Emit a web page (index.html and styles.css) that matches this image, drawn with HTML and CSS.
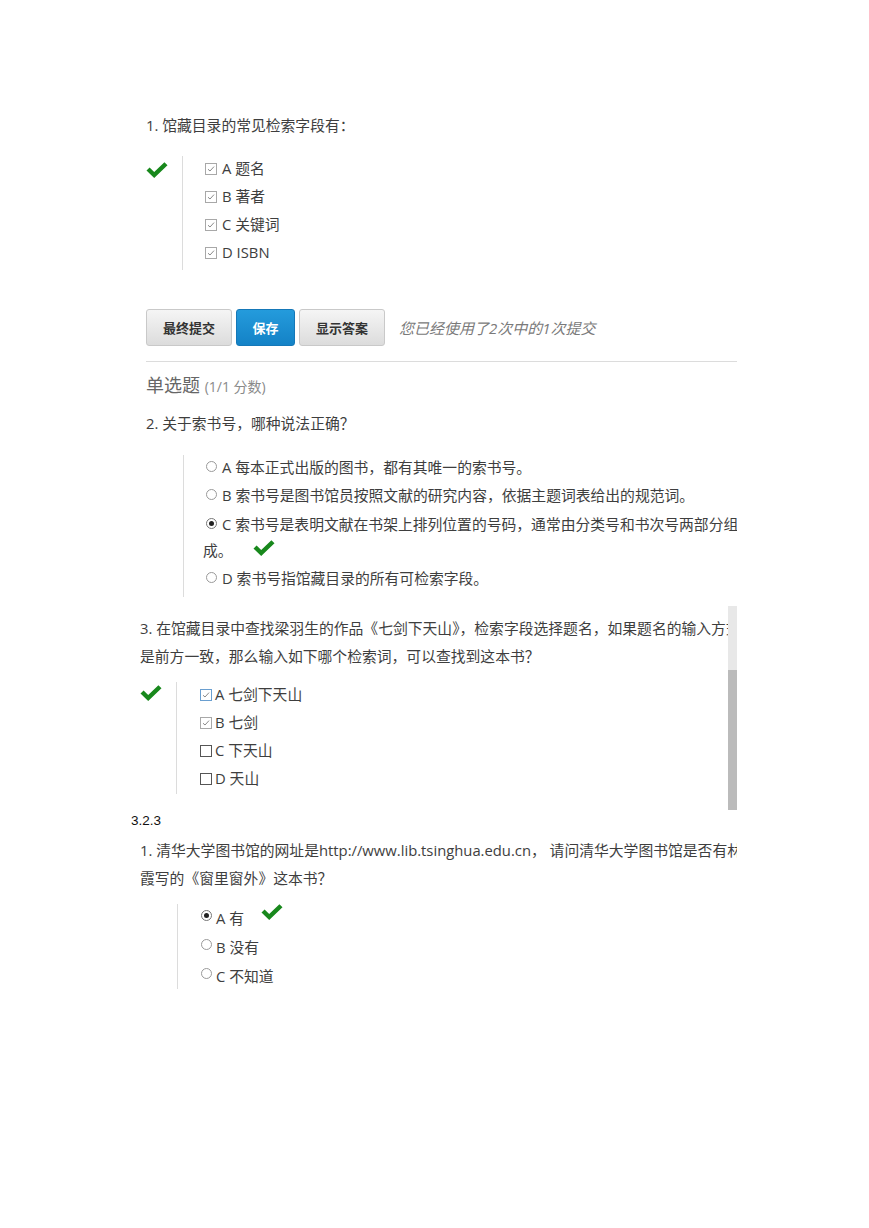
FILE: index.html
```html
<!DOCTYPE html>
<html lang="zh-CN">
  <head>
    <meta charset="UTF-8" />
    <title>检索练习</title>
    <link rel="stylesheet" href="styles.css">
  </head>
  <body>
    <div class="page">
      <!-- 第一张截图：多选 + 按钮 + 单选 -->
      <div class="shot shot-first">
        <p class="q-title">1. 馆藏目录的常见检索字段有：</p>
        <div class="answer">
          <div class="mark">
            <svg class="tick" viewBox="0 0 22 16"><path d="M0.5 8.6 L3.6 5.6 L8.2 10.1 L18.4 0.3 L21.5 3.3 L8.2 16 Z"/></svg>
          </div>
          <div class="options">
            <div class="opt"><svg class="box" viewBox="0 0 12 12"><rect x="0.5" y="0.5" width="11" height="11"/><path d="M3 6.2 L5 8 L9 3.6"/></svg>A 题名</div>
            <div class="opt"><svg class="box" viewBox="0 0 12 12"><rect x="0.5" y="0.5" width="11" height="11"/><path d="M3 6.2 L5 8 L9 3.6"/></svg>B 著者</div>
            <div class="opt"><svg class="box" viewBox="0 0 12 12"><rect x="0.5" y="0.5" width="11" height="11"/><path d="M3 6.2 L5 8 L9 3.6"/></svg>C 关键词</div>
            <div class="opt"><svg class="box" viewBox="0 0 12 12"><rect x="0.5" y="0.5" width="11" height="11"/><path d="M3 6.2 L5 8 L9 3.6"/></svg>D ISBN</div>
          </div>
        </div>

        <div class="actions">
          <button class="btn">最终提交</button>
          <button class="btn btn-blue">保存</button>
          <button class="btn">显示答案</button>
          <span class="attempts">您已经使用了2次中的1次提交</span>
        </div>

        <hr class="divider" />

        <h3 class="kind">单选题 <span class="score">(1/1 分数)</span></h3>

        <p class="q-title">2. 关于索书号，哪种说法正确？</p>
        <div class="answer answer-q2">
          <div class="mark"></div>
          <div class="options">
            <div class="opt"><span class="radio"></span>A 每本正式出版的图书，都有其唯一的索书号。</div>
            <div class="opt"><span class="radio"></span>B 索书号是图书馆员按照文献的研究内容，依据主题词表给出的规范词。</div>
            <div class="opt opt-wrap"><span class="radio on"></span>C 索书号是表明文献在书架上排列位置的号码，通常由分类号和书次号两部分组<br>成。<svg class="tick tick-inline" viewBox="0 0 22 16"><path d="M0.5 8.6 L3.6 5.6 L8.2 10.1 L18.4 0.3 L21.5 3.3 L8.2 16 Z"/></svg></div>
            <div class="opt"><span class="radio"></span>D 索书号指馆藏目录的所有可检索字段。</div>
          </div>
        </div>
      </div>

      <!-- 第二张截图：带滚动条 -->
      <div class="shot shot-scroll">
        <div class="scroll-body">
          <p class="q-title">3. 在馆藏目录中查找梁羽生的作品《七剑下天山》，检索字段选择题名，如果题名的输入方式<br>是前方一致，那么输入如下哪个检索词，可以查找到这本书？</p>
          <div class="answer answer-q3">
            <div class="mark">
              <svg class="tick" viewBox="0 0 22 16"><path d="M0.5 8.6 L3.6 5.6 L8.2 10.1 L18.4 0.3 L21.5 3.3 L8.2 16 Z"/></svg>
            </div>
            <div class="options">
              <div class="opt"><svg class="box box-focus" viewBox="0 0 12 12"><rect x="0.5" y="0.5" width="11" height="11"/><path d="M3 6.2 L5 8 L9 3.6"/></svg>A 七剑下天山</div>
              <div class="opt"><svg class="box" viewBox="0 0 12 12"><rect x="0.5" y="0.5" width="11" height="11"/><path d="M3 6.2 L5 8 L9 3.6"/></svg>B 七剑</div>
              <div class="opt"><svg class="box box-empty" viewBox="0 0 12 12"><rect x="0.5" y="0.5" width="11" height="11"/></svg>C 下天山</div>
              <div class="opt"><svg class="box box-empty" viewBox="0 0 12 12"><rect x="0.5" y="0.5" width="11" height="11"/></svg>D 天山</div>
            </div>
          </div>
        </div>
        <div class="scrollbar"><div class="thumb"></div></div>
      </div>

      <p class="caption">3.2.3</p>

      <!-- 第三张截图 -->
      <div class="shot shot-last">
        <p class="q-title">1. 清华大学图书馆的网址是http://www.lib.tsinghua.edu.cn， 请问清华大学图书馆是否有林青<br>霞写的《窗里窗外》这本书？</p>
        <div class="answer answer-q4">
          <div class="mark"></div>
          <div class="options">
            <div class="opt"><span class="radio on"></span>A 有<svg class="tick tick-inline tick-a" viewBox="0 0 22 16"><path d="M0.5 8.6 L3.6 5.6 L8.2 10.1 L18.4 0.3 L21.5 3.3 L8.2 16 Z"/></svg></div>
            <div class="opt"><span class="radio"></span>B 没有</div>
            <div class="opt"><span class="radio"></span>C 不知道</div>
          </div>
        </div>
      </div>
    </div>
  </body>
</html>
```

FILE: styles.css
```css
:root {
  --text: #3e3e3e;
  --rule: #dcdcdc;
  --green: #18881c;
  --blue: #1a8ad0;
}

* {
  margin: 0;
  padding: 0;
  box-sizing: border-box;
}

body {
  background: #fff;
  color: var(--text);
  font-family: "Open Sans", "Noto Sans CJK SC", sans-serif;
  font-size: 14.8px;
}

.page {
  padding-top: 111px;
}

.shot {
  overflow: hidden;
  white-space: nowrap;
}

.q-title {
  line-height: 28px;
}

.answer {
  display: flex;
}

.mark {
  width: 36px;
  flex-shrink: 0;
}

.tick {
  display: block;
  width: 22px;
  height: 16px;
  fill: var(--green);
}

.options {
  border-left: 1px solid var(--rule);
  padding-left: 22px;
}

.opt {
  line-height: 25px;
  margin-bottom: 3px;
}

.box {
  width: 12px;
  height: 12px;
  margin-right: 5px;
  vertical-align: -1px;
}

.box rect {
  fill: #fff;
  stroke: #a8a8a8;
}

.box path {
  fill: none;
  stroke: #8a8a8a;
  stroke-width: 1;
}

.box-focus rect {
  stroke: #6a9fd0;
}

.box-empty rect {
  stroke: #555;
}

.radio {
  display: inline-block;
  width: 11px;
  height: 11px;
  border: 1px solid #9a9a9a;
  border-radius: 50%;
  margin-right: 5px;
  vertical-align: 1px;
  position: relative;
}

.radio.on {
  border-color: #777;
}

.radio.on::after {
  content: "";
  position: absolute;
  left: 2px;
  top: 2px;
  width: 5px;
  height: 5px;
  border-radius: 50%;
  background: #222;
}

.tick-inline {
  display: inline-block;
  vertical-align: -1px;
  margin-left: 20px;
}

/* first screenshot */
.shot-first {
  margin-left: 146px;
  width: 591px;
}

.shot-first .answer {
  margin-top: 17px;
}

.shot-first .answer .mark {
  padding-top: 6px;
}

.shot-first .answer .options {
  padding-bottom: 2px;
}

.actions {
  display: flex;
  align-items: center;
  gap: 4px;
  margin-top: 39px;
}

.btn {
  height: 37px;
  width: 86px;
  border: 1px solid #c9c9c9;
  border-radius: 3px;
  background: linear-gradient(#f5f5f5, #dcdcdc);
  color: #333;
  font-family: "Noto Sans CJK SC", sans-serif;
  font-weight: 700;
  font-size: 13px;
}

.btn-blue {
  width: 59px;
  border-color: #1578b8;
  background: linear-gradient(#249bdc, #1482c6);
  color: #fff;
}

.attempts {
  margin-left: 10px;
  font-style: italic;
  color: #7a7a7a;
  font-size: 15px;
}

.divider {
  border: 0;
  border-top: 1px solid var(--rule);
  margin-top: 15px;
}

.kind {
  margin-top: 12px;
  line-height: 22px;
  font-size: 18px;
  font-weight: 400;
  color: #666;
}

.score {
  font-size: 14px;
  color: #8a8a8a;
}

.shot-first .kind + .q-title {
  margin-top: 11px;
}

.answer-q2 {
  margin-top: 18px !important;
}

.answer-q2 .mark {
  width: 37px;
}

.answer-q2 .options {
  padding-left: 19px;
  padding-bottom: 3px !important;
}

.answer-q2 .radio {
  margin-left: 3px;
}

.opt-wrap {
  line-height: 26px;
}

.opt-wrap .tick-inline {
  vertical-align: 0px;
}

/* second screenshot with its scrollbar */
.shot-scroll {
  display: flex;
  margin-top: 9px;
  margin-left: 140px;
  width: 597px;
  height: 204px;
}

.scroll-body {
  flex: 1;
  overflow: hidden;
  padding-top: 8px;
}

.scrollbar {
  width: 9px;
  background: #e8e8e8;
  display: flex;
  flex-direction: column;
}

.thumb {
  margin-top: 64px;
  flex: 1;
  background: #bbbbbb;
}

.answer-q3 {
  margin-top: 12px;
}

.answer-q3 .mark {
  padding-top: 3px;
}

.answer-q3 .options {
  padding-left: 23px;
}

.answer-q3 .box {
  margin-right: 3px;
}

.caption {
  margin-left: 131px;
  margin-top: 2px;
  font-family: "Liberation Sans", sans-serif;
  font-size: 13.5px;
  line-height: 17px;
  color: #111;
}

/* third screenshot */
.shot-last {
  margin-left: 140px;
  width: 597px;
  padding-top: 7px;
}

.answer-q4 {
  margin-top: 12px;
}

.answer-q4 .mark {
  width: 37px;
}

.answer-q4 .options {
  padding-left: 23px;
}

.answer-q4 .opt {
  line-height: 26px;
  margin-bottom: 3px;
}

.answer-q4 .opt:last-child {
  margin-bottom: 0;
}

.answer-q4 .radio {
  margin-right: 4px;
  vertical-align: 3px;
}

.tick-a {
  margin-left: 17px;
  vertical-align: 4px;
}
```
